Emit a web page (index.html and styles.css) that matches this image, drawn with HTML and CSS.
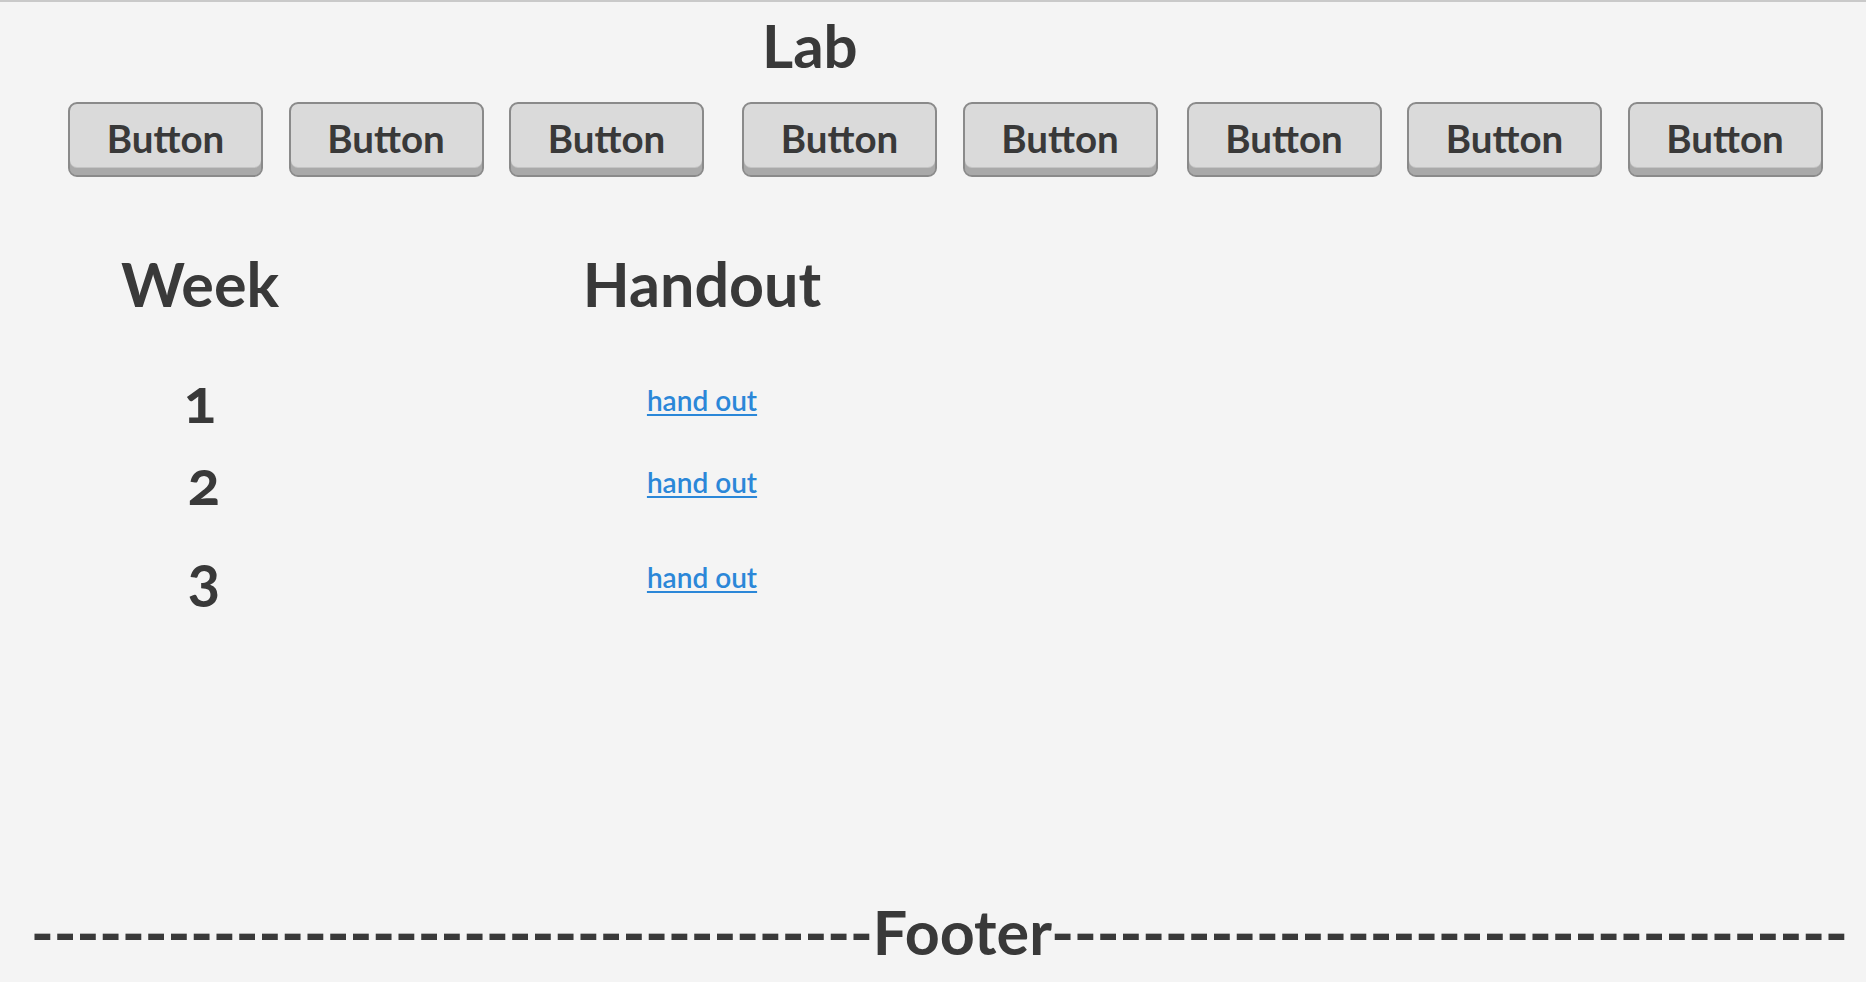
FILE: index.html
```html
<!DOCTYPE html>
<html lang="en">
<head>
<meta charset="utf-8">
<title>Lab</title>
<link rel="stylesheet" href="styles.css">
</head>
<body>
  <header class="page-header">
    <h1 class="title">Lab</h1>
    <nav class="button-bar">
      <button class="btn">Button</button>
      <button class="btn">Button</button>
      <button class="btn">Button</button>
      <button class="btn btn-wide-gap">Button</button>
      <button class="btn">Button</button>
      <button class="btn btn-small-gap">Button</button>
      <button class="btn">Button</button>
      <button class="btn">Button</button>
    </nav>
  </header>
  <main class="content">
    <table class="schedule">
      <colgroup>
        <col class="col-week">
        <col class="col-handout">
      </colgroup>
      <thead>
        <tr>
          <th>Week</th>
          <th>Handout</th>
        </tr>
      </thead>
      <tbody>
        <tr class="row row-short">
          <td class="week">1</td>
          <td class="handout"><a href="#">hand out</a></td>
        </tr>
        <tr class="row row-tall">
          <td class="week week-shift">2</td>
          <td class="handout"><a href="#">hand out</a></td>
        </tr>
        <tr class="row">
          <td class="week week-shift">3</td>
          <td class="handout"><a href="#">hand out</a></td>
        </tr>
      </tbody>
    </table>
  </main>
  <footer class="footer">-------------------------------------Footer-----------------------------------</footer>
</body>
</html>
```

FILE: styles.css
```css
* {
  box-sizing: border-box;
}

html, body {
  margin: 0;
  padding: 0;
}

body {
  min-height: 100vh;
  display: flex;
  flex-direction: column;
  background: #f4f4f4;
  border-top: 2px solid #c9c9c9;
  color: #393939;
  font-family: Lato, "Open Sans", "Liberation Sans", sans-serif;
}

.page-header {
  display: flex;
  flex-direction: column;
}

.title {
  margin: 0;
  padding: 7px 0 0 762px;
  font-size: 60px;
  line-height: 72px;
  font-weight: 700;
}

.button-bar {
  display: flex;
  gap: 25.5px;
  padding-left: 68px;
  margin-top: 21px;
}

.btn {
  width: 195px;
  height: 75px;
  padding: 0 0 4px;
  border: 2px solid #8a8a8a;
  border-radius: 9px;
  background: #dadada;
  box-shadow: inset 0 -7px 0 #a9a9a9, inset 0 -8px 0 #c4c4c4;
  font-family: Lato, "Open Sans", sans-serif;
  font-size: 38.5px;
  font-weight: 700;
  color: #393939;
  cursor: pointer;
}

.btn-wide-gap {
  margin-left: 12.5px;
}

.btn-small-gap {
  margin-left: 3.5px;
}

.content {
  margin-top: 70px;
}

.schedule {
  margin-left: 80px;
  border-collapse: collapse;
  table-layout: fixed;
}

.col-week {
  width: 240px;
}

.col-handout {
  width: 764px;
}

.schedule th {
  padding: 0 0 43px;
  font-size: 61px;
  line-height: 73px;
  font-weight: 700;
  text-align: center;
}

.schedule td {
  padding: 0;
  height: 73px;
  vertical-align: middle;
  text-align: center;
}

.row-short td {
  padding-bottom: 9px;
}

.row-tall td {
  padding-bottom: 22px;
}

.week {
  font-size: 61px;
  line-height: 73px;
  font-weight: 700;
  font-variant-numeric: oldstyle-nums;
}

.schedule td.week-shift {
  padding-left: 8px;
}

.handout a {
  font-size: 28px;
  line-height: 34px;
  font-weight: 600;
  color: #2b87d8;
  text-decoration: underline;
  text-decoration-thickness: 2px;
  text-underline-offset: 3px;
}

.footer {
  margin-top: auto;
  padding: 0 0 14px 31px;
  font-size: 61px;
  line-height: 73px;
  font-weight: 700;
  white-space: nowrap;
}
```
